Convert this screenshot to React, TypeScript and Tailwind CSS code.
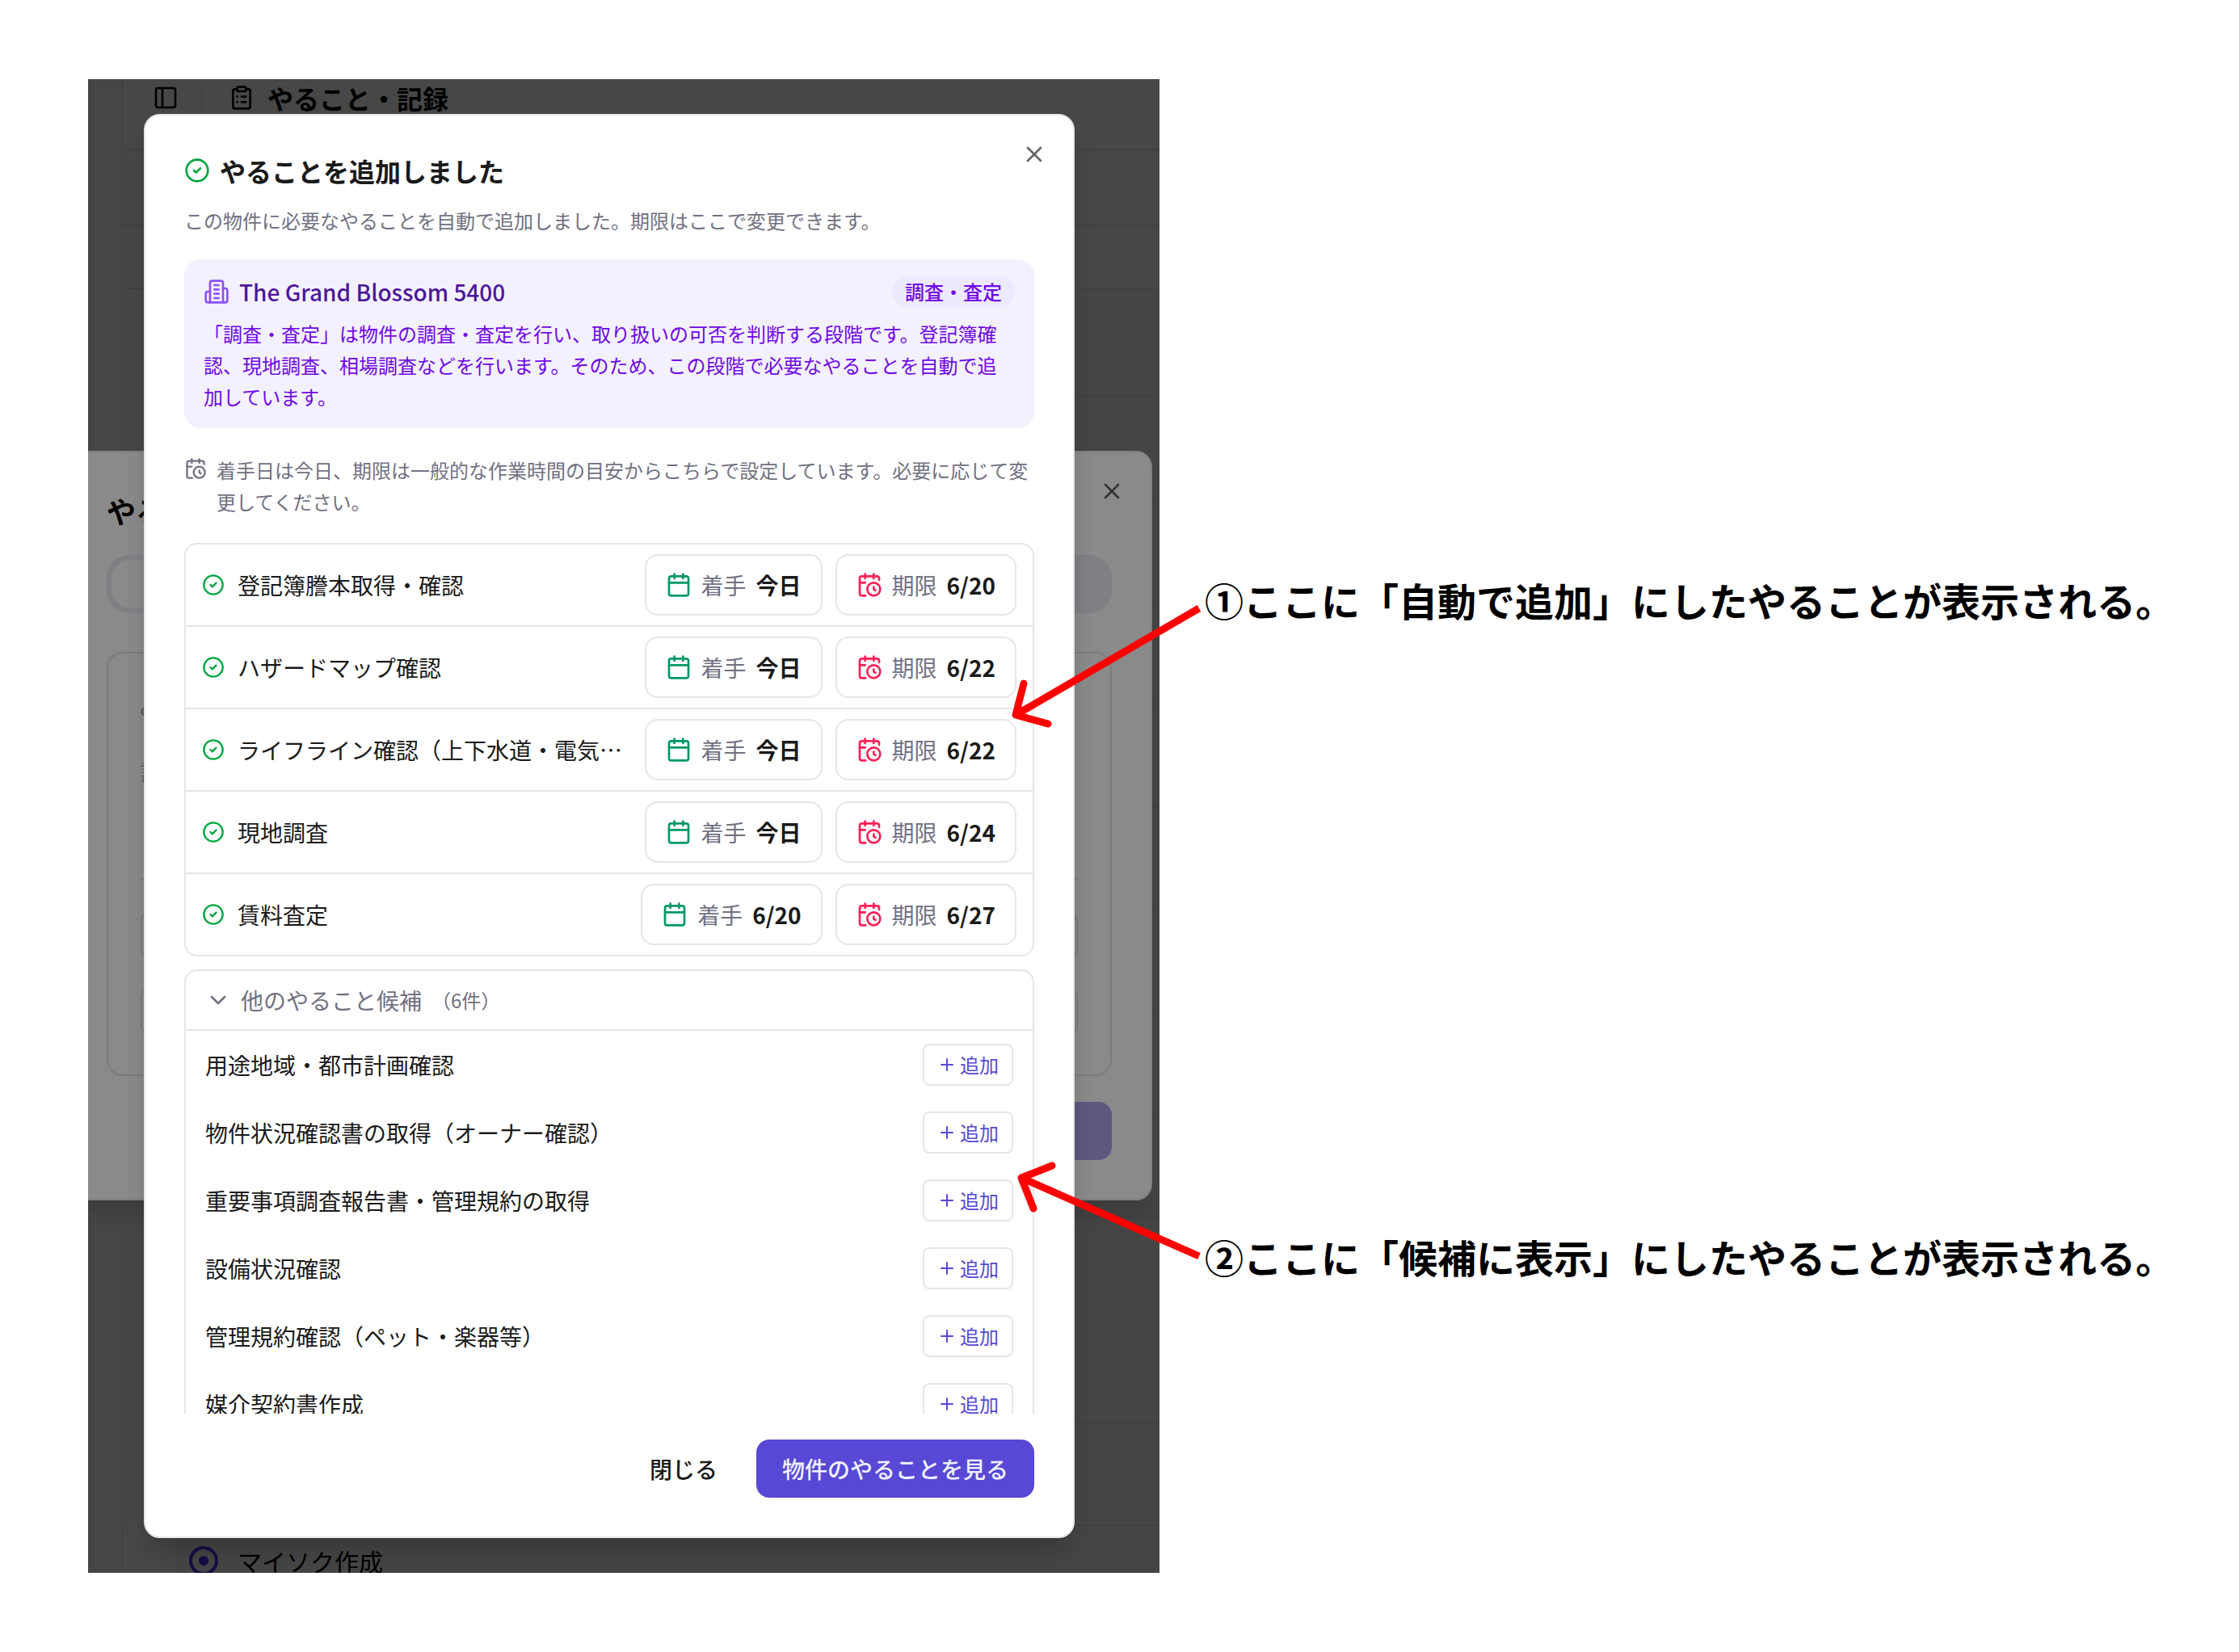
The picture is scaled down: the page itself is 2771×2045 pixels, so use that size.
import React, { useState } from "react";
import {
  Calendar,
  CalendarClock,
  ChevronDown,
  CircleCheck,
  ClipboardList,
  PanelLeft,
  Plus,
  X,
} from "lucide-react";

const addedTasks = [
  { name: "登記簿謄本取得・確認", start: "今日", due: "6/20" },
  { name: "ハザードマップ確認", start: "今日", due: "6/22" },
  { name: "ライフライン確認（上下水道・電気・ガス）", start: "今日", due: "6/22" },
  { name: "現地調査", start: "今日", due: "6/24" },
  { name: "賃料査定", start: "6/20", due: "6/27" },
];

const candidates = [
  "用途地域・都市計画確認",
  "物件状況確認書の取得（オーナー確認）",
  "重要事項調査報告書・管理規約の取得",
  "設備状況確認",
  "管理規約確認（ペット・楽器等）",
  "媒介契約書作成",
];

function BuildingIcon() {
  return (
    <svg
      className="size-8 shrink-0 text-[#8e51ff]"
      viewBox="0 0 24 24"
      fill="none"
      stroke="currentColor"
      strokeWidth="2"
      strokeLinecap="round"
      strokeLinejoin="round"
      aria-hidden="true"
    >
      <path d="M6 22V4a2 2 0 0 1 2-2h8a2 2 0 0 1 2 2v18Z" />
      <path d="M6 12H4a2 2 0 0 0-2 2v6a2 2 0 0 0 2 2h2" />
      <path d="M18 9h2a2 2 0 0 1 2 2v9a2 2 0 0 1-2 2h-2" />
      <path d="M10 6h4M10 10h4M10 14h4M10 18h4" />
    </svg>
  );
}

function DateButton({ kind, value }: { kind: "start" | "due"; value: string }) {
  return (
    <button
      type="button"
      className="flex h-[76px] shrink-0 items-center gap-3 rounded-2xl border-2 border-[#e6e6e6] bg-white px-6 text-[28px] leading-10"
    >
      {kind === "start" ? (
        <Calendar className="size-8 text-[#009966]" />
      ) : (
        <CalendarClock className="size-8 text-[#ff2056]" />
      )}
      <span className="text-[#717182]">{kind === "start" ? "着手" : "期限"}</span>
      <span className="font-semibold">{value}</span>
    </button>
  );
}

/* Page behind the dialogs, already dimmed by the overlay. */
function PageBehind() {
  return (
    <div className="flex h-full bg-[#474747] text-black">
      <div className="w-[42px] shrink-0 bg-[#464646]" />
      <div className="flex min-w-0 grow flex-col border-l-2 border-[#424242]">
        <header className="flex h-[88px] shrink-0 items-start border-b-2 border-[#414141] pt-[3px] pl-9">
          <div className="flex h-10 items-center">
            <PanelLeft className="size-8" />
            <div className="ml-7 h-8 w-[2px] bg-[#414141]" />
            <ClipboardList className="ml-8 size-8" />
            <h1 className="ml-4 text-[32px] leading-10 font-bold">やること・記録</h1>
          </div>
        </header>
        <div className="h-[94px] shrink-0 border-b-2 border-[#414141]" />
        <div className="h-[78px] shrink-0 border-b-2 border-[#414141]" />
        <ul className="ml-[65px] flex grow flex-col bg-[#464545]">
          <li className="h-[134px] shrink-0 border-b-2 border-[#424141]" />
          {Array.from({ length: 11 }, (_, i) => (
            <li key={i} className="h-[127px] shrink-0 border-b-2 border-[#424141]" />
          ))}
          <li className="flex h-[86px] shrink-0 items-center px-4">
            <div className="flex size-9 items-center justify-center rounded-full border-4 border-[#170d45]">
              <div className="size-3 rounded-full bg-[#170d45]" />
            </div>
            <span className="ml-6 text-[30px] leading-10">マイソク作成</span>
          </li>
        </ul>
      </div>
    </div>
  );
}

/* First dialog, dimmed, of which only the edges can be seen. */
function BackDialog() {
  return (
    <section className="absolute top-[460px] -left-[27px] flex h-[928px] w-[1344px] flex-col rounded-[20px] border-2 border-[#808080] bg-[#8a8a8a] px-12 text-black shadow-[0_20px_30px_-6px_rgba(0,0,0,0.15)]">
      <X className="absolute top-8 right-8 size-8 text-[#333333]" />
      <h2 className="mt-[52px] text-[36px] leading-10 font-bold">やることを追加</h2>
      <div className="mt-[35px] flex h-[72px] shrink-0 rounded-[28px] bg-[#7f8084] p-[6px]">
        <div className="w-1/2 rounded-[24px] bg-[#8a8a8a]" />
      </div>
      <div className="mt-12 flex h-[525px] shrink-0 flex-col rounded-[20px] border-2 border-[#7c7c7c] px-10 text-[28px] leading-10 text-[#5a5a5c]">
        <div className="mt-[66px] size-3 rounded-full bg-[#5f5f60]" />
        <p className="mt-12">設定する項目</p>
        <div className="mt-[112px] border-t-2 border-[#7c7c7c]" />
        <div className="mt-9 h-[66px] rounded-2xl border-2 border-[#7c7c7c]" />
        <div className="mt-7 h-[66px] rounded-2xl border-2 border-[#7c7c7c]" />
      </div>
      <div className="mt-8 ml-auto h-[72px] w-64 shrink-0 rounded-2xl bg-[#5c5880]" />
    </section>
  );
}

function AddedDialog() {
  const [open, setOpen] = useState(true);
  return (
    <section
      role="dialog"
      aria-labelledby="dialog-title"
      className="absolute top-[43px] right-[105px] left-[69px] flex h-[1763px] flex-col rounded-[20px] border-2 border-[#e6e6e6] bg-white px-12 pt-12 pb-12 text-[#1a1a1a] shadow-[0_20px_30px_-6px_rgba(0,0,0,0.2)]"
    >
      <button type="button" aria-label="閉じる" className="absolute top-8 right-8 text-[#666666]">
        <X className="size-8" />
      </button>
      <div className="flex items-center gap-3">
        <CircleCheck className="size-8 text-[#00a63e]" />
        <h2 id="dialog-title" className="text-[32px] leading-10 font-semibold">
          やることを追加しました
        </h2>
      </div>
      <p className="mt-[22px] text-[24px] leading-10 text-[#717182]">
        この物件に必要なやることを自動で追加しました。期限はここで変更できます。
      </p>

      <div className="mt-7 flex min-h-0 grow flex-col overflow-hidden">
        <div className="shrink-0 rounded-[20px] bg-[#f4f1ff] px-6 py-5">
          <div className="flex h-10 items-center gap-3">
            <BuildingIcon />
            <span className="text-[28px] leading-10 font-medium text-[#4d179a]">
              The Grand Blossom 5400
            </span>
            <span className="ml-auto rounded-full bg-[#ede9fe] px-4 py-1 text-[24px] leading-8 font-medium text-[#7008e7]">
              調査・査定
            </span>
          </div>
          <p className="mt-3 text-[24px] leading-[39px] text-[#7008e7]">
            「調査・査定」は物件の調査・査定を行い、取り扱いの可否を判断する段階です。登記簿確認、現地調査、相場調査などを行います。そのため、この段階で必要なやることを自動で追加しています。
          </p>
        </div>

        <div className="mt-8 flex shrink-0 gap-3 text-[#717182]">
          <CalendarClock className="mt-1 size-7 shrink-0" />
          <p className="text-[24px] leading-[39px]">
            着手日は今日、期限は一般的な作業時間の目安からこちらで設定しています。必要に応じて変更してください。
          </p>
        </div>

        <ul className="mt-8 shrink-0 divide-y-2 divide-[#e6e6e6] rounded-2xl border-2 border-[#e6e6e6]">
          {addedTasks.map((t) => (
            <li key={t.name} className="flex items-center gap-4 px-5 py-3">
              <CircleCheck className="size-7 shrink-0 text-[#00a63e]" />
              <span className="min-w-0 grow truncate text-[28px] leading-10">{t.name}</span>
              <DateButton kind="start" value={t.start} />
              <DateButton kind="due" value={t.due} />
            </li>
          ))}
        </ul>

        <div className="mt-4 shrink-0 rounded-2xl border-2 border-[#e6e6e6]">
          <button
            type="button"
            aria-expanded={open}
            onClick={() => setOpen(!open)}
            className="flex h-[74px] w-full items-center gap-3 border-b-2 border-[#e6e6e6] px-6 text-[28px] leading-10 text-[#717182]"
          >
            <ChevronDown className="size-8" />
            <span>他のやること候補</span>
            <span className="text-[24px]">（6件）</span>
          </button>
          {open && (
            <ul>
              {candidates.map((name) => (
                <li key={name} className="flex items-center justify-between px-6 py-4">
                  <span className="text-[28px] leading-10">{name}</span>
                  <button
                    type="button"
                    className="flex h-[52px] items-center gap-1 rounded-lg border-2 border-[#e6e6e6] px-4 text-[24px] leading-8 text-[#5848d6]"
                  >
                    <Plus className="size-6" />
                    追加
                  </button>
                </li>
              ))}
            </ul>
          )}
        </div>
      </div>

      <div className="mt-8 flex shrink-0 justify-end gap-4 text-[28px] leading-10 font-medium">
        <button type="button" className="h-[72px] rounded-2xl px-8">
          閉じる
        </button>
        <button type="button" className="h-[72px] rounded-2xl bg-[#5848d6] px-8 text-[#eef2ff]">
          物件のやることを見る
        </button>
      </div>
    </section>
  );
}

export default function App() {
  return (
    <main
      lang="ja"
      className="relative flex items-start bg-white py-[98px] pl-[109px] font-['Noto_Sans_CJK_JP','Noto_Sans',sans-serif]"
    >
      <div className="relative h-[1849px] w-[1326px] shrink-0 overflow-hidden">
        <PageBehind />
        <BackDialog />
        <AddedDialog />
      </div>
      <div className="flex grow flex-col gap-[741px] pt-[608px] pl-14 text-[48px] leading-[72px] font-bold whitespace-nowrap text-black">
        <p>①ここに「自動で追加」にしたやることが表示される。</p>
        <p>②ここに「候補に表示」にしたやることが表示される。</p>
      </div>
      <svg
        className="pointer-events-none absolute top-[740px] left-[1240px] h-[840px] w-[260px]"
        viewBox="1240 740 260 840"
        fill="none"
        stroke="#ff0000"
        strokeWidth="9"
        strokeLinejoin="round"
        aria-hidden="true"
      >
        <path d="M1484 753L1257 885M1484 1555L1264 1458" />
        <path
          strokeLinecap="round"
          d="M1267 846L1257 885L1297 896M1302 1443L1264 1458L1279 1496"
        />
      </svg>
    </main>
  );
}
